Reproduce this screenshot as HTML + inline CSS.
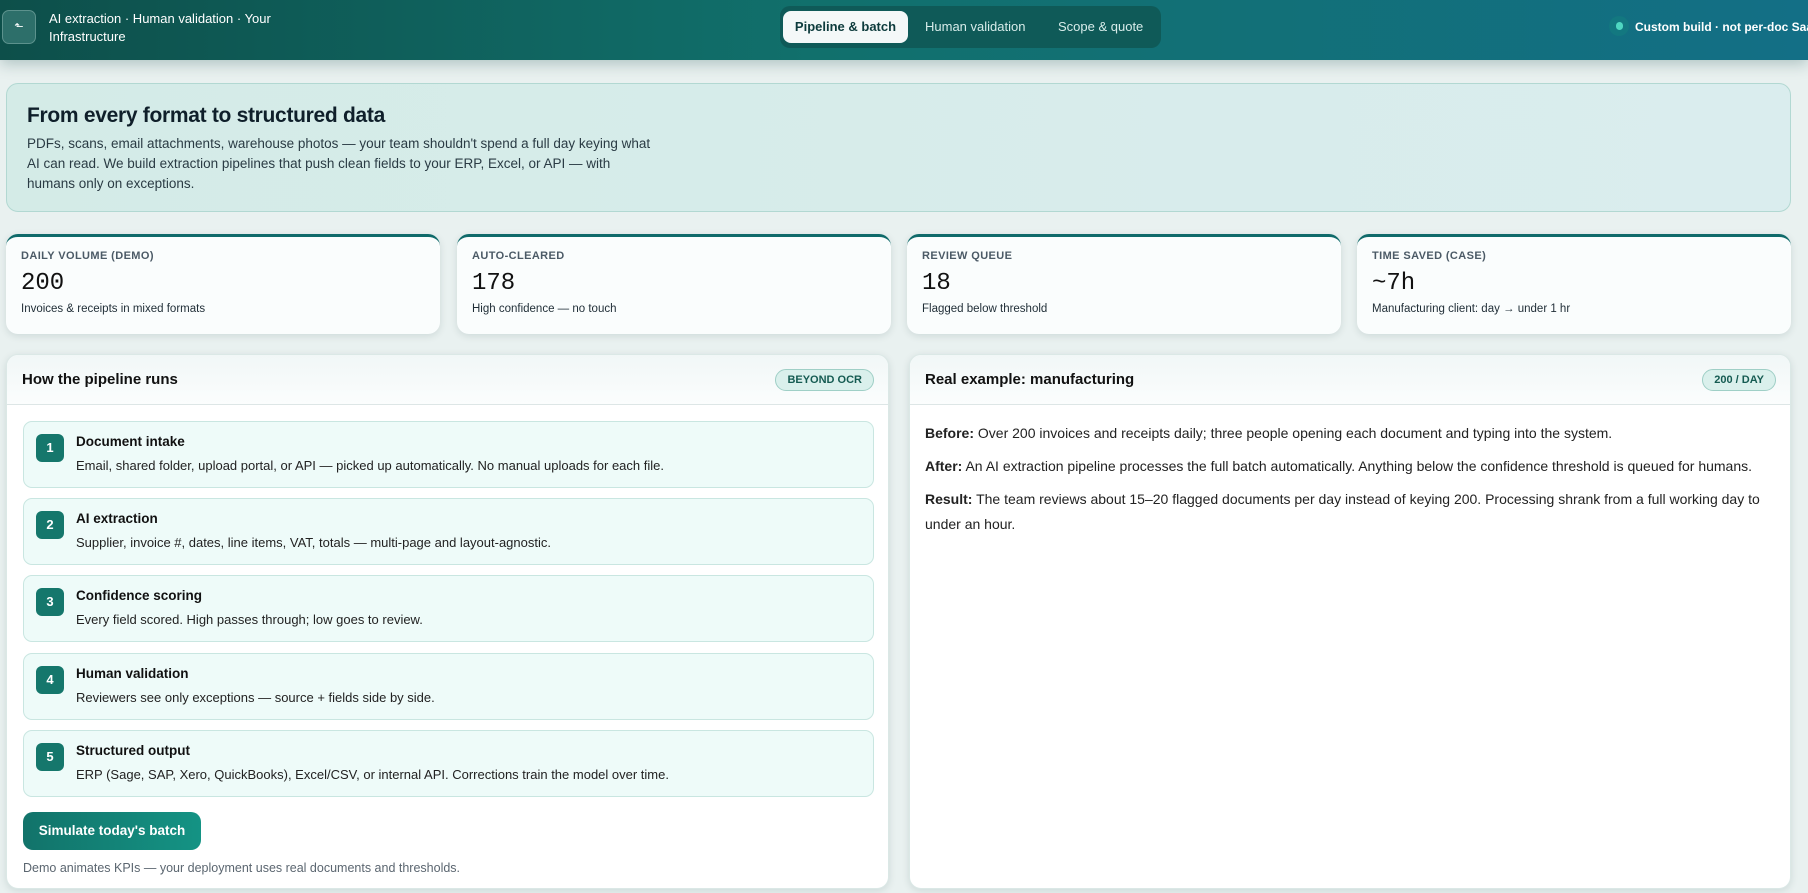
<!DOCTYPE html>
<html style="height:893px;overflow:hidden"><head><meta charset="utf-8"><style>
*{box-sizing:border-box;margin:0;padding:0}
body{width:1808px;height:893px;overflow:hidden;background:#e9f1f0;font-family:"Liberation Sans",sans-serif;color:#0f1f2a;position:relative}
.hdr{position:absolute;left:0;top:0;width:1808px;height:60px;background:linear-gradient(90deg,#0d4f4a 0%,#11706c 45%,#136f86 100%);box-shadow:0 4px 14px rgba(0,60,60,.25)}
.logo{position:absolute;left:2px;top:10px;width:34px;height:34px;border-radius:7px;background:#2d6f6a;border:1px solid #5c928d;color:#fff;font-size:11px;text-align:center;line-height:32px}
.brand{position:absolute;left:49px;top:10px;color:#fff;font-size:13px;line-height:18px;width:240px}
.tabs{position:absolute;left:780px;top:6px;width:381px;height:42px;border-radius:10px;background:#0f5a58;}
.tab{position:absolute;top:5px;height:32px;line-height:32px;font-size:13px;color:#d7ecea}
.tab.on{left:3px;width:125px;background:#f4f8f8;border-radius:8px;color:#0d3b3c;text-align:center;font-weight:bold}
.pill{position:absolute;left:1609px;top:16px;width:20px;height:20px;border-radius:10px;background:#137880}
.pill:after{content:"";position:absolute;left:7px;top:6px;width:7px;height:8px;border-radius:4px;background:#4fd6c1}
.badge{position:absolute;left:1635px;top:20px;color:#fff;font-size:12px;font-weight:bold;white-space:nowrap}
.hero{position:absolute;left:6px;top:83px;width:1785px;height:129px;border-radius:12px;border:1px solid #b2d8d2;background:linear-gradient(90deg,#d4ebe7,#daedee);padding:20px 20px}
.hero h1{font-size:21px;font-weight:bold;color:#0f1f2a;letter-spacing:-.3px;margin-bottom:6px}
.hero p{font-size:13.5px;line-height:20px;color:#2a3b44;width:625px}
.kpi{position:absolute;top:234px;width:434px;height:100px;background:#fafdfd;border-radius:12px;box-shadow:0 2px 8px rgba(0,50,50,.12);border-top:3px solid #0f6a6a;padding:13px 15px}
.kpi .l{font-size:11px;color:#4b5a66;font-weight:bold;letter-spacing:.4px}
.kpi .v{font-family:"Liberation Mono",monospace;font-size:24px;margin:8px 0 6px;color:#111}
.kpi .s{font-size:11.5px;color:#1f2d36}
.panel{position:absolute;top:354px;height:535px;background:#fff;border-radius:12px;box-shadow:0 2px 8px rgba(0,50,50,.12);border:1px solid #dbe8e6;overflow:hidden}
.ph{height:50px;border-bottom:1px solid #dde6e6;background:linear-gradient(#f1f7f7,#fbfdfd);position:relative}
.ph h2{position:absolute;left:15px;top:16px;font-size:15px;font-weight:bold;color:#111}
.tag{position:absolute;top:14px;height:22px;line-height:20px;padding:0 11px;border-radius:11px;border:1px solid #9fcfc6;background:#daf0ec;color:#155b52;font-size:11px;font-weight:bold}
.step{position:absolute;left:16px;width:851px;height:67px;border:1px solid #c9e6e1;border-radius:9px;background:#eefbf9}
.num{position:absolute;left:12px;top:12px;width:28px;height:28px;border-radius:6px;background:#15776c;color:#fff;font-size:13px;font-weight:bold;text-align:center;line-height:28px}
.step b{position:absolute;left:52px;top:12px;font-size:13.5px;color:#111}
.step span{position:absolute;left:52px;top:36px;font-size:13px;color:#222}
.btn{position:absolute;left:16px;top:457px;width:178px;height:38px;border-radius:10px;background:linear-gradient(90deg,#12736a,#149384);color:#fff;font-size:13.5px;font-weight:bold;line-height:38px;text-align:center}
.note{position:absolute;left:16px;top:506px;font-size:12.5px;color:#5b6670}
.rp p{font-size:14px;line-height:25px;color:#222;margin:0 15px 8px}
.rp p b{color:#222}
</style></head><body>
<div class="hdr">
<div class="logo">⬑</div>
<div class="brand">AI extraction · Human validation · Your Infrastructure</div>
<div class="tabs"><div class="tab on">Pipeline &amp; batch</div><div class="tab" style="left:145px">Human validation</div><div class="tab" style="left:278px">Scope &amp; quote</div></div>
<div class="pill"></div><div class="badge">Custom build · not per-doc SaaS</div>
</div>
<div class="hero"><h1>From every format to structured data</h1><p>PDFs, scans, email attachments, warehouse photos — your team shouldn't spend a full day keying what AI can read. We build extraction pipelines that push clean fields to your ERP, Excel, or API — with humans only on exceptions.</p></div>
<div class="kpi" style="left:6px"><div class="l">DAILY VOLUME (DEMO)</div><div class="v">200</div><div class="s">Invoices &amp; receipts in mixed formats</div></div>
<div class="kpi" style="left:457px"><div class="l">AUTO-CLEARED</div><div class="v">178</div><div class="s">High confidence — no touch</div></div>
<div class="kpi" style="left:907px"><div class="l">REVIEW QUEUE</div><div class="v">18</div><div class="s">Flagged below threshold</div></div>
<div class="kpi" style="left:1357px"><div class="l">TIME SAVED (CASE)</div><div class="v">~7h</div><div class="s">Manufacturing client: day → under 1 hr</div></div>
<div class="panel" style="left:6px;width:883px">
<div class="ph"><h2>How the pipeline runs</h2><div class="tag" style="right:14px">BEYOND OCR</div></div>
<div class="step" style="top:66px"><div class="num">1</div><b>Document intake</b><span>Email, shared folder, upload portal, or API — picked up automatically. No manual uploads for each file.</span></div>
<div class="step" style="top:143px"><div class="num">2</div><b>AI extraction</b><span>Supplier, invoice #, dates, line items, VAT, totals — multi-page and layout-agnostic.</span></div>
<div class="step" style="top:220px"><div class="num">3</div><b>Confidence scoring</b><span>Every field scored. High passes through; low goes to review.</span></div>
<div class="step" style="top:298px"><div class="num">4</div><b>Human validation</b><span>Reviewers see only exceptions — source + fields side by side.</span></div>
<div class="step" style="top:375px"><div class="num">5</div><b>Structured output</b><span>ERP (Sage, SAP, Xero, QuickBooks), Excel/CSV, or internal API. Corrections train the model over time.</span></div>
<div class="btn">Simulate today's batch</div>
<div class="note">Demo animates KPIs — your deployment uses real documents and thresholds.</div>
</div>
<div class="panel rp" style="left:909px;width:882px">
<div class="ph"><h2>Real example: manufacturing</h2><div class="tag" style="right:14px">200 / DAY</div></div>
<div style="height:16px"></div>
<p><b>Before:</b> Over 200 invoices and receipts daily; three people opening each document and typing into the system.</p>
<p><b>After:</b> An AI extraction pipeline processes the full batch automatically. Anything below the confidence threshold is queued for humans.</p>
<p><b>Result:</b> The team reviews about 15–20 flagged documents per day instead of keying 200. Processing shrank from a full working day to under an hour.</p>
</div>
</body></html>
